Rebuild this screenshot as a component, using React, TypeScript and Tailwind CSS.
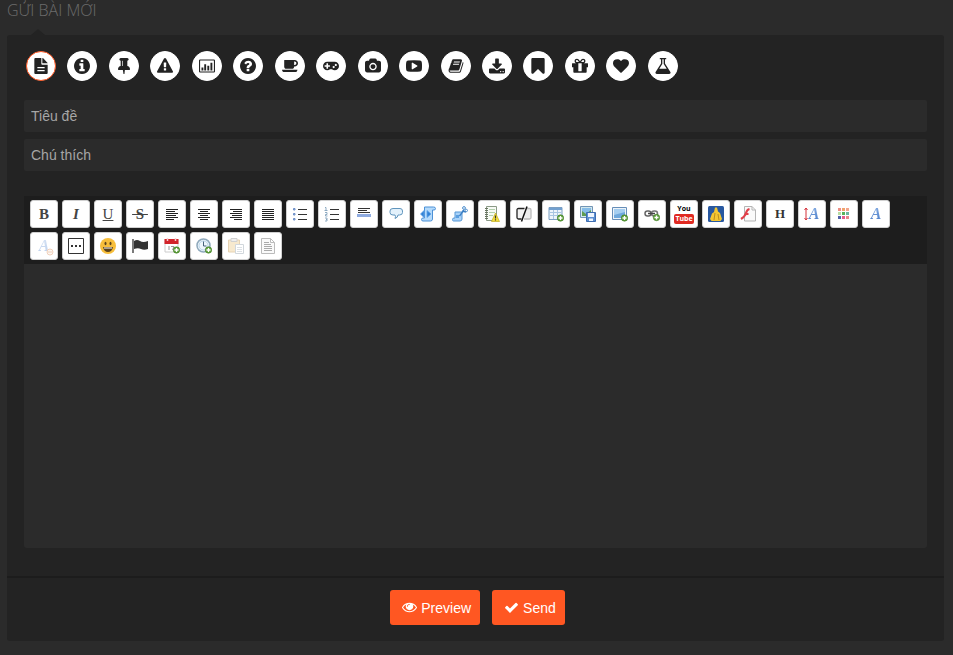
import React from 'react';

type PostType = { label: string; box: string; d: string };

const circle =
  'm640 416q0 209-103 385.5t-279.5 279.5-385.5 103-385.5-103-279.5-279.5-103-385.5 103-385.5 279.5-279.5 385.5-103 385.5 103 279.5 279.5 103 385.5z';

const square = '128 128 1536 1536';

const postTypes: PostType[] = [
  {
    label: 'Article', box: square,
    d: 'M1024 128v480q0 32 32 32h480q0-32-24-56l-400-424q-32-32-88-32zM928 128h-576q-96 0-96 96v1344q0 96 96 96h1088q96 0 96-96v-800h-512q-96 0-96-96zM576 992h640q32 0 32 32v64q0 32-32 32h-640q-32 0-32-32v-64q0-32 32-32zM576 1280h640q32 0 32 32v64q0 32-32 32h-640q-32 0-32-32v-64q0-32 32-32z',
  },
  {
    label: 'Information', box: square,
    d: 'M1152 1376v-160q0-14-9-23t-23-9h-96v-512q0-14-9-23t-23-9h-320q-14 0-23 9t-9 23v160q0 14 9 23t23 9h96v320h-96q-14 0-23 9t-9 23v160q0 14 9 23t23 9h448q14 0 23-9t9-23zm-128-896v-160q0-14-9-23t-23-9h-192q-14 0-23 9t-9 23v160q0 14 9 23t23 9h192q14 0 23-9t9-23z' + circle,
  },
  {
    label: 'Pinned', box: square,
    d: 'M800 864v-448q0-14-9-23t-23-9-23 9-9 23v448q0 14 9 23t23 9 23-9 9-23zm672 352q0 26-19 45t-45 19h-429l-51 483q-2 12-10.5 20.5t-20.5 8.5h-1q-27 0-32-27l-76-485h-404q-26 0-45-19t-19-45q0-123 78.5-221.5t177.5-98.5v-512q-52 0-90-38t-38-90 38-90 90-38h640q52 0 90 38t38 90-38 90-90 38v512q99 0 177.5 98.5t78.5 221.5z',
  },
  {
    label: 'Warning', box: '0 0 1792 1792',
    d: 'M1024 1375v-190q0-14-9.5-23.5t-22.5-9.5h-192q-13 0-22.5 9.5t-9.5 23.5v190q0 14 9.5 23.5t22.5 9.5h192q13 0 22.5-9.5t9.5-23.5zm-2-374l18-459q0-12-10-19-13-11-24-11h-220q-11 0-24 11-10 7-10 21l17 457q0 10 10 16.5t24 6.5h185q14 0 23.5-6.5t10.5-16.5zm-14-934l768 1408q35 63-2 126-17 29-46.5 46t-63.5 17h-1536q-34 0-63.5-17t-46.5-46q-37-63-2-126l768-1408q17-31 47-49t65-18 65 18 47 49z',
  },
  {
    label: 'Statistics', box: '32 0 1856 1856',
    d: 'M160 160h1600q128 0 128 128v1280q0 128-128 128h-1600q-128 0-128-128v-1280q0-128 128-128zM192 288q-32 0-32 32v1216q0 32 32 32h1536q32 0 32-32v-1216q0-32-32-32zM320 1088h220v352h-220zM640 736h220v704h-220zM1000 896h220v544h-220zM1360 544h220v896h-220z',
  },
  {
    label: 'Question', box: square,
    d: 'M1024 1376v-192q0-14-9-23t-23-9h-192q-14 0-23 9t-9 23v192q0 14 9 23t23 9h192q14 0 23-9t9-23zm256-672q0-88-55.5-163t-138.5-116-170-41q-243 0-371 213-15 24 8 42l132 100q7 6 19 6 16 0 25-12 53-68 86-92 34-24 86-24 48 0 85.5 26t37.5 59q0 38-20 61t-68 45q-63 28-115.5 86.5t-52.5 125.5v36q0 14 9 23t23 9h192q14 0 23-9t9-23q0-19 21.5-49.5t54.5-49.5q32-18 49-28.5t46-35 44.5-48 28-60.5 12.5-81zm384 192q0 209-103 385.5t-279.5 279.5-385.5 103-385.5-103-279.5-279.5-103-385.5 103-385.5 279.5-279.5 385.5-103 385.5 103 279.5 279.5 103 385.5z',
  },
  {
    label: 'Coffee', box: '0 32 1856 1856',
    d: 'M1664 640q0-80-56-136t-136-56h-64v384h64q80 0 136-56t56-136zm-1664 768h1792q0 106-75 181t-181 75h-1280q-106 0-181-75t-75-181zm1856-768q0 159-112.5 271.5t-271.5 112.5h-64v32q0 92-66 158t-158 66h-704q-92 0-158-66t-66-158v-736q0-26 19-45t45-19h1152q159 0 271.5 112.5t112.5 271.5z',
  },
  {
    label: 'Games', box: '0 64 1920 1920',
    d: 'M832 1088v-128q0-14-9-23t-23-9h-192v-192q0-14-9-23t-23-9h-128q-14 0-23 9t-9 23v192h-192q-14 0-23 9t-9 23v128q0 14 9 23t23 9h192v192q0 14 9 23t23 9h128q14 0 23-9t9-23v-192h192q14 0 23-9t9-23zm576 64q0-53-37.5-90.5t-90.5-37.5-90.5 37.5-37.5 90.5 37.5 90.5 90.5 37.5 90.5-37.5 37.5-90.5zm256-256q0-53-37.5-90.5t-90.5-37.5-90.5 37.5-37.5 90.5 37.5 90.5 90.5 37.5 90.5-37.5 37.5-90.5zm256 128q0 212-150 362t-362 150q-192 0-338-128h-220q-146 128-338 128-212 0-362-150t-150-362 150-362 362-150h896q212 0 362 150t150 362z',
  },
  {
    label: 'Photo', box: '-64 -64 1920 1920',
    d: 'M896 672q119 0 203.5 84.5t84.5 203.5-84.5 203.5-203.5 84.5-203.5-84.5-84.5-203.5 84.5-203.5 203.5-84.5zm704-416q106 0 181 75t75 181v896q0 106-75 181t-181 75h-1408q-106 0-181-75t-75-181v-896q0-106 75-181t181-75h224l51-136q19-49 69.5-84.5t103.5-35.5h512q53 0 103.5 35.5t69.5 84.5l51 136h224zm-704 1152q185 0 316.5-131.5t131.5-316.5-131.5-316.5-316.5-131.5-316.5 131.5-131.5 316.5 131.5 316.5 316.5 131.5z',
  },
  {
    label: 'Video', box: '0 0 1792 1792',
    d: 'M1280 896q0-37-30-54l-512-320q-31-20-65-2-33 18-33 56v640q0 38 33 56 16 8 31 8 20 0 34-10l512-320q30-17 30-54zm512 0q0 96-1 150t-8.5 136.5-22.5 147.5q-16 73-69 123t-124 58q-222 25-671 25t-671-25q-71-8-124.5-58t-69.5-123q-14-65-21.5-147.5t-8.5-136.5-1-150 1-150 8.5-136.5 22.5-147.5q16-73 69-123t124-58q222-25 671-25t671 25q71 8 124.5 58t69.5 123q14 65 21.5 147.5t8.5 136.5 1 150z',
  },
  {
    label: 'Book', box: '32 0 1728 1792',
    d: 'M1703 478q40 57 18 129l-275 906q-19 64-76.5 107.5t-122.5 43.5h-923q-77 0-148.5-53.5t-99.5-131.5q-24-67-2-127 0-4 3-27t4-37q1-8-3-21.5t-3-19.5q2-11 8-21t16.5-23.5 16.5-23.5q23-38 45-91.5t30-91.5q3-10 .5-30t-.5-28q3-11 17-28t17-23q21-36 42-92t25-90q1-9-2.5-32t.5-28q4-13 22-30.5t22-22.5q19-26 42.5-84.5t27.5-96.5q1-8-3-25.5t-2-26.5q2-8 9-18t18-23 17-21q8-12 16.5-30.5t15-35 16-36 19.5-32 26.5-23.5 36-11.5 47.5 5.5l-1 3q38-9 51-9h761q74 0 114 56t18 130l-274 906q-36 119-71.5 153.5t-128.5 34.5h-869q-27 0-38 15-11 16-1 43 24 70 144 70h923q29 0 56-15.5t35-41.5l300-987q7-22 5-57 38 15 59 43zm-1064 2q-4 13 2 22.5t20 9.5h608q13 0 25.5-9.5t16.5-22.5l21-64q4-13-2-22.5t-20-9.5h-608q-13 0-25.5 9.5t-16.5 22.5zm-83 256q-4 13 2 22.5t20 9.5h608q13 0 25.5-9.5t16.5-22.5l21-64q4-13-2-22.5t-20-9.5h-608q-13 0-25.5 9.5t-16.5 22.5z',
  },
  {
    label: 'Download', box: '64 -64 1664 1664',
    d: 'M1344 1344q0-26-19-45t-45-19-45 19-19 45 19 45 45 19 45-19 19-45zm256 0q0-26-19-45t-45-19-45 19-19 45 19 45 45 19 45-19 19-45zm128-224v320q0 40-28 68t-68 28h-1472q-40 0-68-28t-28-68v-320q0-40 28-68t68-28h465l135 136q58 56 136 56t136-56l136-136h464q40 0 68 28t28 68zm-325-569q17 41-14 70l-448 448q-18 19-45 19t-45-19l-448-448q-31-29-14-70 17-39 59-39h256v-448q0-26 19-45t45-19h256q26 0 45 19t19 45v448h256q42 0 59 39z',
  },
  {
    label: 'Bookmark', box: square,
    d: 'M1420 128q23 0 44 9 33 13 52.5 41t19.5 62v1289q0 34-19.5 62t-52.5 41q-19 8-44 8-48 0-83-32l-441-424-441 424q-36 33-83 33-23 0-44-9-33-13-52.5-41t-19.5-62v-1289q0-34 19.5-62t52.5-41q21-9 44-9h1048z',
  },
  {
    label: 'Gift', box: square,
    d: 'M1056 1356v-716h-320v716q0 25 18 38.5t46 13.5h192q28 0 46-13.5t18-38.5zm-456-844h195l-126-161q-26-31-69-31-40 0-68 28t-28 68 28 68 68 28zm688-96q0-40-28-68t-68-28q-43 0-69 31l-125 161h194q40 0 68-28t28-68zm376 256v320q0 14-9 23t-23 9h-96v416q0 40-28 68t-68 28h-1088q-40 0-68-28t-28-68v-416h-96q-14 0-23-9t-9-23v-320q0-14 9-23t23-9h440q-93 0-158.5-65.5t-65.5-158.5 65.5-158.5 158.5-65.5q107 0 168 77l128 165 128-165q61-77 168-77 93 0 158.5 65.5t65.5 158.5-65.5 158.5-158.5 65.5h440q14 0 23 9t9 23z',
  },
  {
    label: 'Favourite', box: '0 0 1792 1792',
    d: 'M896 1664q-26 0-44-18l-624-602q-10-8-27.5-26t-55.5-65.5-68-97.5-53.5-121-23.5-138q0-220 127-344t351-124q62 0 126.5 21.5t120 58 95.5 68.5 76 68q36-36 76-68t95.5-68.5 120-58 126.5-21.5q224 0 351 124t127 344q0 221-229 450l-623 600q-18 18-44 18z',
  },
  {
    label: 'Science', box: square,
    d: 'M1591 1448q56 89 21.5 152.5t-140.5 63.5h-1152q-106 0-140.5-63.5t21.5-152.5l503-793v-399h-64q-26 0-45-19t-19-45 19-45 45-19h512q26 0 45 19t19 45-19 45-45 19h-64v399zm-779-725l-272 429h712l-272-429-20-31v-436h-128v436z',
  },
];

const Svg = ({ children }: { children: React.ReactNode }) => (
  <svg className="size-4 shrink-0" viewBox="0 0 16 16" fill="none" aria-hidden="true">
    {children}
  </svg>
);

const Plus = ({ y = 12 }: { y?: number }) => (
  <>
    <circle cx="12.5" cy={y} r="3.2" fill="#5f9f3c" stroke="#3f7f24" strokeWidth="0.6" />
    <path d={`M10.5 ${y}h4M12.5 ${y - 2}v4`} stroke="#fff" strokeWidth="1.3" />
  </>
);

const Lines = ({ rows }: { rows: number[][] }) => (
  <Svg>
    {rows.map(([x, w], i) => (
      <path key={i} d={`M${x} ${3.5 + i * 2}h${w}`} stroke="#222" />
    ))}
  </Svg>
);

const BlueA = () => (
  <span className="bg-linear-to-b from-[#8fb4e6] to-[#3f74c4] bg-clip-text px-px font-['Liberation_Serif',serif] text-base font-bold italic leading-5 text-transparent">
    A
  </span>
);

const serif = "font-['Liberation_Serif',serif] text-[15px] leading-4 text-[#444]";

const tools: [string, React.ReactNode][] = [
  ['Bold', <span className={serif + ' font-bold'}>B</span>],
  ['Italic', <span className={serif + ' font-bold italic'}>I</span>],
  ['Underline', <span className={serif + ' underline'}>U</span>],
  ['Strikethrough', <span className={serif + ' whitespace-pre font-bold line-through'}>{'\u00a0S\u00a0'}</span>],
  ['Align left', <Lines rows={[[2, 12], [2, 9], [2, 12], [2, 10], [2, 12], [2, 8]]} />],
  ['Align centre', <Lines rows={[[2, 12], [4, 8], [2, 12], [4, 8], [2, 12], [4, 8]]} />],
  ['Align right', <Lines rows={[[2, 12], [5, 9], [2, 12], [4, 10], [2, 12], [6, 8]]} />],
  ['Justify', <Lines rows={[[2, 12], [2, 12], [2, 12], [2, 12], [2, 12], [2, 12]]} />],
  ['Bullet list', (
    <Svg>
      <path d="M1.5 2.5h1.5v1.5h-1.5zM1.5 7.5h1.5v1.5h-1.5zM1.500 12.5h1.5v1.5h-1.5z" fill="#9dbbe8" stroke="#6d8fc7" />
      <path d="M6 3.5h9M6 8.5h9M6 13.5h9" stroke="#333" />
    </Svg>
  )],
  ['Numbered list', (
    <Svg>
      <path d="M1 1.500h1v3M.5 4.500h3M1 6.500h2v2h-1.500v1.500h2M1 12h2v3h-2M2 13.500h1" stroke="#7598b5" strokeWidth=".8" />
      <path d="M6 3.5h9M6 8.5h9M6 13.5h9" stroke="#333" />
    </Svg>
  )],
  ['Horizontal line', (
    <Svg>
      <path d="M2 2.5h12M2 4.5h9M2 6.5h12" stroke="#333" />
      <path d="M1 8h14v3H1z" fill="#8fabe0" />
    </Svg>
  )],
  ['Quote', (
    <Svg>
      <path d="M5 2.500h7q2.500 0 2.500 2.500v1.500q0 2.500-3 2.500H10q0 2.500-3 3.500 1-2 0-3.500H5q-3 0-3-2.500V5q0-2.500 3-2.500z" fill="#e3f1fb" stroke="#6095bd" />
    </Svg>
  )],
  ['Code', (
    <Svg>
      <path d="M4.500 1h9q2 0 2 1.500T14 4h-1.500v9q0 2-2 2H3q-1.500 0-1.500-1.500T3 12h1.500z" fill="#b4dafb" stroke="#4d91d6" />
      <path d="M4 4.500v7L.5 8zM7 4.500v7L11 8z" fill="#2f80d4" stroke="#5fa3e8" strokeWidth=".8" />
    </Svg>
  )],
  ['Cut code', (
    <Svg>
      <path d="M3 6h7v7q0 2-2 2H1.500Q.5 15 .5 13.500T2 12h1z" fill="#a9d2f8" stroke="#5797d5" />
      <path d="M7.500 10l4.500-6M10 5l4 1" stroke="#3b7fc4" strokeWidth="1.3" />
      <circle cx="12" cy="2" r="1.4" stroke="#4b8ccc" />
      <circle cx="14.3" cy="4.500" r="1.2" stroke="#4b8ccc" />
      <path d="M4 9h3v3H4z" fill="#5c9fe0" />
    </Svg>
  )],
  ['Spoiler', (
    <Svg>
      <path d="M2.5.5h10v14h-10z" fill="#f7faf5" stroke="#8b9a86" />
      <path d="M1 2.500h3M1 4.500h3M1 6.500h3M1 8.500h3M1 10.500h3M1 12.500h3" stroke="#687461" />
      <path d="M5 3.500h6M5 6.500h6M5 9.500h4" stroke="#b2d0ad" />
      <path d="M11.500 7l4 8.500h-8z" fill="#f5df3c" stroke="#c2ad20" strokeWidth=".7" />
      <path d="M11.500 9.500v3M11.500 13.200v1.300" stroke="#333" strokeWidth="1.2" />
    </Svg>
  )],
  ['Hidden', (
    <Svg>
      <path d="M8.500 2.500H2.500q-1.500 0-1.500 1.500v7.500q0 1.500 1.500 1.500H5.500" fill="#f3f3f3" stroke="#222" strokeWidth="1.3" />
      <path d="M11 2.500h2.500q1.500 0 1.500 1.500v7.500q0 1.500-1.500 1.500H8" fill="#eee" stroke="#bbb" strokeWidth="1.3" />
      <path d="M11 .5L5.500 15.500" stroke="#111" strokeWidth="1.5" />
    </Svg>
  )],
  ['Table', (
    <Svg>
      <path d="M1 1.500h13v12H1z" fill="#edf4fb" stroke="#7b9fc3" />
      <path d="M1 3h13" stroke="#72a0cf" strokeWidth="2" />
      <path d="M2 6.500h11M2 9.500h11M5.500 4v9M9.500 4v9" stroke="#a7c5e2" />
      <Plus />
    </Svg>
  )],
  ['Upload image', (
    <Svg>
      <path d="M.5.5h12v11h-12z" fill="#d2e8ee" stroke="#7395b5" />
      <path d="M2 2h9v8H2z" fill="#5f9c50" />
      <path d="M2 2h9v2L6 8 2 5z" fill="#87bde8" />
      <path d="M6.500 6.500h9v9h-9z" fill="#5c8fd2" stroke="#3e6db0" />
      <path d="M8 7h6v4H8zM9 12.500h4V15H9z" fill="#edf5ff" />
    </Svg>
  )],
  ['Image', (
    <Svg>
      <path d="M.5 1.500h14v12H.5z" fill="#edf3f9" stroke="#668eb8" />
      <path d="M2 3h11v9H2z" fill="#6fa8dc" />
      <path d="M2 3h11v3L2 9z" fill="#a5cef0" />
      <Plus />
    </Svg>
  )],
  ['Link', (
    <Svg>
      <rect x="1" y="5" width="6" height="5" rx="2.5" stroke="#666" strokeWidth="1.5" />
      <rect x="7.500" y="5" width="6" height="5" rx="2.5" stroke="#777" strokeWidth="1.5" />
      <path d="M4 7.500h7" stroke="#444" strokeWidth="1.5" />
      <Plus y={11.5} />
    </Svg>
  )],
  ['YouTube', (
    <span className="flex flex-col items-center font-['Open_Sans',sans-serif] text-[7px] font-bold text-black">
      <span className="leading-[10px]">You</span>
      <span className="rounded-xs bg-[#e02a22] px-px leading-[10px] text-white">Tube</span>
    </span>
  )],
  ['Dailymotion', (
    <Svg>
      <rect width="16" height="16" rx="1.500" fill="#2858a0" />
      <path d="M7 1.500h2l1 4 2 1.500 2 6-1.500 2H3.500L2 13l2-5.500L6 6z" fill="#f4c631" />
      <path d="M7 7l-1 7M10 8l1 6" stroke="#b98c1e" />
    </Svg>
  )],
  ['Flash', (
    <Svg>
      <path d="M4.500.5h7.500l3.500 3.500v11h-11zM12 .5v3.500h3.500" fill="#fafafa" stroke="#b5b5b5" />
      <path d="M9.500 3Q7 3.500 6 7T1 13M5 8h3.500" stroke="#e0404a" strokeWidth="2.2" />
    </Svg>
  )],
  ['Headers', <span className="font-['Liberation_Serif',serif] text-[13px] font-bold leading-4 text-[#333]">H</span>],
  ['Font size', (
    <span className="flex items-center">
      <svg className="h-4 w-1" viewBox="0 0 4 16" fill="none" aria-hidden="true">
        <path d="M2 2v12M.5 4L2 2l1.500 2M.5 12L2 14l1.500-2" stroke="#d3303b" />
      </svg>
      <BlueA />
    </span>
  )],
  ['Font colour', (
    <Svg>
      {['#ed8e83', '#f0a36d', '#f3a58c', '#b7dda4', '#58b45c', '#6bb6a0', '#5262a8', '#e65b8c', '#e98589'].map((c, i) => (
        <rect key={i} x={2 + (i % 3) * 4} y={2 + Math.floor(i / 3) * 4} width="3" height="3" fill={c} />
      ))}
    </Svg>
  )],
  ['Font', <BlueA />],
  ['Remove formatting', (
    <span className="relative flex opacity-35">
      <BlueA />
      <svg className="absolute -right-1 bottom-0 size-2" viewBox="0 0 8 8" fill="none" aria-hidden="true">
        <circle cx="4" cy="4" r="3" fill="#fbeadb" stroke="#d57a3e" />
        <path d="M2 4h4" stroke="#d57a3e" />
      </svg>
    </span>
  )],
  ['More', (
    <Svg>
      <path d="M.5.5h15v15H.5z" stroke="#333" />
      <path d="M3 7h2v2H3zM7 7h2v2H7zM11 7h2v2h-2z" fill="#333" />
    </Svg>
  )],
  ['Smilies', (
    <Svg>
      <circle cx="8" cy="8" r="8" fill="#f7be3b" />
      <ellipse cx="5.5" cy="5.5" rx="1" ry="1.8" fill="#59411b" />
      <ellipse cx="10.5" cy="5.5" rx="1" ry="1.8" fill="#59411b" />
      <path d="M3 9h10q-1 5-5 5T3 9z" fill="#59411b" />
      <path d="M4 9.500h8v1H4z" fill="#fff" />
    </Svg>
  )],
  ['Flag', (
    <Svg>
      <path d="M1 1v14" stroke="#333" strokeWidth="1.3" />
      <path d="M2 3q3-2 6 0t8 0v8q-4 1.500-7 0t-7 0z" fill="#333" />
    </Svg>
  )],
  ['Date', (
    <Svg>
      <path d="M1 1.500h13v12.500H1z" fill="#fff" stroke="#ccc" />
      <path d="M.5 1h14v5H.5z" fill="#d2232a" />
      <path d="M3.500 0v3M11.500 0v3" stroke="#f7cfcf" strokeWidth="1.5" />
      <path d="M5 8v4M7 8.500h3L8.500 12" stroke="#999" />
      <Plus />
    </Svg>
  )],
  ['Time', (
    <Svg>
      <circle cx="7.500" cy="7.500" r="6.500" fill="#eef6fc" stroke="#8fa9bc" strokeWidth="1.5" />
      <circle cx="7.500" cy="7.500" r="4.500" stroke="#b8d4e8" />
      <path d="M7.500 3.500v4.500h3" stroke="#44617a" />
      <Plus />
    </Svg>
  )],
  ['Paste', (
    <Svg>
      <g opacity=".45">
        <path d="M.5 2h11v12H.5z" fill="#efcf95" stroke="#c99f5b" />
        <path d="M3 .5h6v3H3z" fill="#ddd" stroke="#999" />
        <path d="M7.500 6.500h8v9h-8z" fill="#fff" stroke="#9ba8b3" />
        <path d="M9 9.500h5M9 11.500h5M9 13.500h5" stroke="#b5bdc6" />
      </g>
    </Svg>
  )],
  ['Source', (
    <Svg>
      <path d="M1.500.5h9l4 4v11h-13zM10.500.5v4h4" fill="#fafafa" stroke="#bbb" />
      <path d="M4 4.500h5M4 6.500h7M4 8.500h8M4 10.500h8M4 12.500h8" stroke="#aaa" />
    </Svg>
  )],
];

const field =
  'block h-8 w-full rounded-xs bg-[#2b2b2b] px-[7px] text-sm text-[#a6a6a6] outline-none placeholder:text-[#a6a6a6]';

const action =
  'flex h-[35px] items-center gap-1 rounded-[3px] bg-[#ff5722] pl-3 pr-[9px] text-sm text-white';

export default function App() {
  return (
    <main className="min-h-screen bg-[#2b2b2b] px-[7px] pb-3.5 font-['Liberation_Sans',Arial,sans-serif]">
      <h1 className="h-[35px] font-['Open_Sans',sans-serif] text-base font-light leading-5 text-[#6c6c6c]">
        GỬI BÀI MỚI
      </h1>
      <form className="relative mr-0.5 rounded-[3px] bg-[#232323]" onSubmit={(e) => e.preventDefault()}>
        <span className="absolute -top-1.5 left-6 border-x-[7px] border-b-[6px] border-x-transparent border-b-[#232323]" />
        <div className="px-[17px] pb-7 pt-4">
          <div className="flex max-w-[654px] justify-between pl-0.5" role="group" aria-label="Post type">
            {postTypes.map((p, i) => (
              <button
                key={p.label}
                type="button"
                aria-label={p.label}
                className={
                  'flex size-[30px] items-center justify-center rounded-full border bg-white text-[#222] ' +
                  (i === 0 ? 'border-[#ff5722]' : 'border-white')
                }
              >
                <svg className="size-4" viewBox={p.box} fill="currentColor" fillRule="evenodd" aria-hidden="true">
                  <path d={p.d} />
                </svg>
              </button>
            ))}
          </div>

          <div className="mt-[19px] flex flex-col gap-[7px]">
            <input className={field} type="text" placeholder="Tiêu đề" aria-label="Tiêu đề" />
            <input className={field} type="text" placeholder="Chú thích" aria-label="Chú thích" />
          </div>

          <div className="mt-[25px] flex flex-wrap gap-1 bg-[#1d1d1d] px-1.5 py-1" role="toolbar" aria-label="Editor">
            {tools.map(([label, icon]) => (
              <button
                key={label}
                type="button"
                aria-label={label}
                className="flex size-7 items-center justify-center rounded-[3px] border border-[#d0d0d0] bg-white"
              >
                {icon}
              </button>
            ))}
          </div>
          <textarea
            className="block h-[284px] w-full resize-none rounded-b-[3px] bg-[#2b2b2b] p-2 text-sm text-[#a6a6a6] outline-none"
            aria-label="Message"
          />
        </div>

        <div className="flex justify-center gap-3 border-t-2 border-[#1c1c1c] pb-4 pl-1 pt-3">
          <button type="submit" className={action}>
            <svg className="size-[15px]" viewBox="0 64 1792 1792" fill="currentColor" aria-hidden="true">
              <path d="M1664 960q-152-236-381-353 61 104 61 225 0 185-131.5 316.5t-316.5 131.5-316.5-131.5-131.5-316.5q0-121 61-225-229 117-381 353 133 205 333.5 326.5t434.5 121.5 434.5-121.5 333.5-326.5zm-720-384q0-20-14-34t-34-14q-125 0-214.5 89.5t-89.5 214.5q0 20 14 34t34 14 34-14 14-34q0-86 61-147t147-61q20 0 34-14t14-34zm848 384q0 34-20 69-140 230-376.5 368.5t-499.5 138.5-499.5-139-376.5-368q-20-35-20-69t20-69q140-229 376.5-368t499.5-139 499.5 139 376.5 368q20 35 20 69z" />
            </svg>
            Preview
          </button>
          <button type="submit" className={action}>
            <svg className="size-[15px]" viewBox="0 0 1792 1792" fill="currentColor" aria-hidden="true">
              <path d="M1671 566q0 40-28 68l-724 724-136 136q-28 28-68 28t-68-28l-136-136-362-362q-28-28-28-68t28-68l136-136q28-28 68-28t68 28l294 295 656-657q28-28 68-28t68 28l136 136q28 28 28 68z" />
            </svg>
            Send
          </button>
        </div>
      </form>
    </main>
  );
}
